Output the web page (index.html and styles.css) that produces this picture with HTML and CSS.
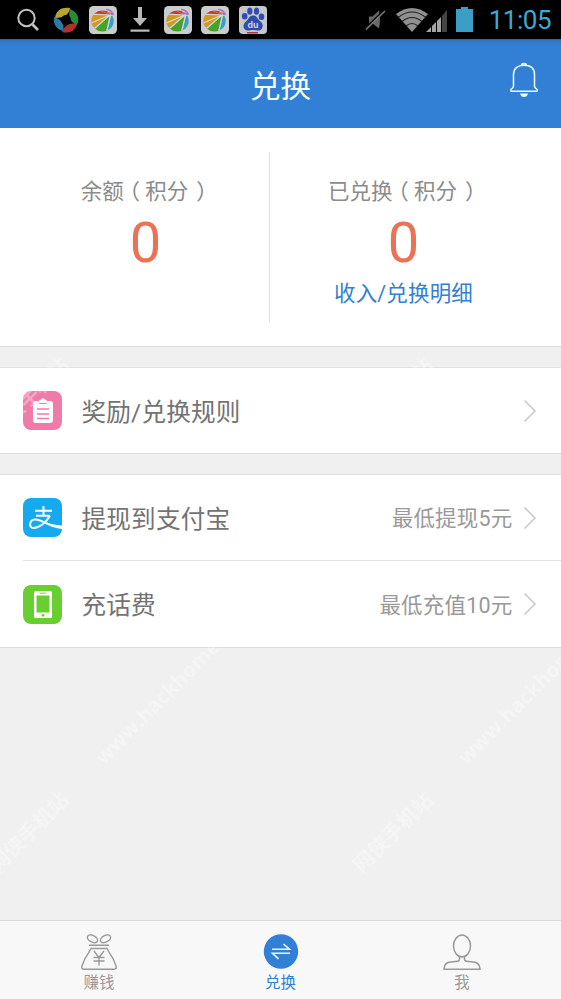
FILE: index.html
```html
<!DOCTYPE html>
<html lang="zh-CN">
<head>
<meta charset="utf-8">
<title>兑换</title>
<link rel="stylesheet" href="styles.css">
</head>
<body>
<svg class="defs" aria-hidden="true">
  <defs>
    <clipPath id="ball"><ellipse cx="13.5" cy="15" rx="11.2" ry="10.5"/></clipPath>
    <symbol id="fan" viewBox="0 0 28 28">
      <rect width="28" height="28" rx="4.5" fill="#cbcccd"/>
      <g clip-path="url(#ball)">
        <path d="M21 9L3 8L8 3z" fill="#c5401f"/>
        <path d="M21 9L9 3L18 2z" fill="#c5401f"/>
        <path d="M21 9L0 9L1 22L6 21z" fill="#d39a1c"/>
        <path d="M21 9L5 22L9 28L18 26z" fill="#45a32a"/>
        <path d="M22 10L18 27L27 21L28 10z" fill="#3b9cc6"/>
        <path d="M21 9L0 8M21 9L0 18M21 9L5 23M21.500 9L17 28" stroke="#d5d7d8" stroke-width="1.2"/>
      </g>
      <path d="M17 3.5q5 0 7.5 5M18 7q3-.5 6 2" fill="none" stroke="#b571b9" stroke-width="1.6"/>
    </symbol>
    <symbol id="chevron" viewBox="0 0 14 24"><path d="M1.5 1.5L12 12L1.5 22.5" fill="none" stroke="#c8c8c8" stroke-width="1.5"/></symbol>
  </defs>
</svg>
<div class="app">
  <div class="status">
    <div class="status-left">
      <svg class="search" width="24" height="24" viewBox="0 0 24 24" fill="none" stroke="#c2c2c2" stroke-width="2"><circle cx="9.500" cy="10" r="8.2"/><path d="M15.500 16.500L21 22" stroke-width="2.6"/></svg>
      <svg width="26" height="26" viewBox="0 0 26 26"><path d="M2 11C3 3 9 0 17 1C17 6 12 11 2 11z" fill="#b9a52c"/><path d="M17 2C25 5 27 12 24 18C17 15 15 9 17 2z" fill="#278c35"/><path d="M24 17C22 24 16 27 9 25C11 18 18 15 24 17z" fill="#b52f31"/><path d="M1 10C8 12 12 17 10 24C3 22 0 17 1 10z" fill="#2b7da6"/><circle cx="13" cy="13" r="5" fill="#000"/></svg>
      <svg width="28" height="28"><use href="#fan"/></svg>
      <svg class="download" width="20" height="26" viewBox="0 0 20 26" fill="#b8b8b8"><path d="M8 0h4v11h5l-7 8l-7-8h5zM.5 22.5h19v2.2H.5z"/></svg>
      <svg width="28" height="28"><use href="#fan"/></svg>
      <svg width="28" height="28"><use href="#fan"/></svg>
      <svg width="28" height="28" viewBox="0 0 28 28"><rect width="28" height="28" rx="4" fill="#c5c7cb"/><g fill="#304dae"><ellipse cx="5.7" cy="10.3" rx="2.8" ry="3.3"/><ellipse cx="10.8" cy="5.2" rx="2.6" ry="3.6"/><ellipse cx="17.5" cy="5.2" rx="2.6" ry="3.6"/><ellipse cx="22.5" cy="10.7" rx="2.8" ry="3.3"/><path d="M14 9.5C18 9.5 18 13 21.5 15.5C26 19 23 25.5 18 24.5Q14 23.5 10 24.5C4.500 25.500 2.500 19 7 15.500C10 13 10 9.500 14 9.500z"/></g><text x="14" y="22.300" class="du">du</text><path d="M8 26.800h11" stroke="#b52d43" stroke-width="1.500"/></svg>
    </div>
    <div class="status-right">
      <svg width="22" height="24" viewBox="0 0 22 24"><path d="M4 8.500h3.500L14 2.500q2 8 0 18l-6.500-5H4z" fill="#686868"/><path d="M0 20.500L19 2" stroke="#080808" stroke-width="1.500"/><path d="M1 21.500L20 3" stroke="#777" stroke-width="1.700"/></svg>
      <svg class="wifi" width="32" height="24" viewBox="0 0 32 24"><path d="M0 6Q16-6 32 6L16 24z" fill="#909090"/><path d="M2 9.500Q16-1.500 30 9.500M6 13.500Q16 5.500 26 13.500M10 18Q16 13 22 18" fill="none" stroke="#202020" stroke-width="1.200"/></svg>
      <svg class="signal" width="22" height="24" viewBox="0 0 22 24"><path d="M0 24L5 19v5zM6 18l4-4v10H6zM11 13l4-4v15h-4z" fill="#a3a3a3"/><path d="M16 8l5-6v22h-5z" fill="#454545"/></svg>
      <svg class="battery" width="17" height="25" viewBox="0 0 17 25"><path d="M5 0h7v2h5v23H0V2h5z" fill="#3b9fc5"/></svg>
      <span class="clock">11:05</span>
    </div>
  </div>

  <header class="header">
    <h1>兑换</h1>
    <svg class="bell" width="30" height="37" viewBox="0 0 30 37" fill="none" stroke="#eaffff" stroke-width="1.500"><path d="M12.500 3.300Q12.500 1.500 15 1.500Q17.500 1.500 17.500 3.300M4.500 24V12.500C4.500 6.500 8.500 3.300 15 3.300S25.500 6.500 25.500 12.500V24Q25.500 26 28 27.300Q29 29.300 27 29.300H3Q1 29.300 2 27.300Q4.500 26 4.500 24z"/><path d="M11 31.500h8Q18 35 15 35T11 31.500z" fill="#eaffff" stroke="none"/></svg>
  </header>

  <section class="balance">
    <div class="col col-left">
      <div class="label">余额<span class="paren">（</span>积分<span class="paren last">）</span></div>
      <div class="amount">0</div>
    </div>
    <div class="col col-right">
      <div class="label">已兑换<span class="paren">（</span>积分<span class="paren last">）</span></div>
      <div class="amount">0</div>
      <a class="detail">收入/兑换明细</a>
    </div>
  </section>

  <section class="group">
    <div class="row">
      <svg class="icon" viewBox="0 0 39 39"><rect width="39" height="39" rx="8" fill="#f07ba8"/><path d="M12.500 10h2.500l1.500 3h7l1.500-3h2.500q2.500 0 2.500 3v16q0 3-3 3H13q-3 0-3-3V13q0-3 2.500-3z" fill="#fff"/><path d="M15.500 12V10.500Q15.500 9 17.500 9Q18 7.300 20 7.300T22.500 9Q24.500 9 24.500 10.500V12z" fill="#fff"/><path d="M14 18h12M14 23h12M14 27.500h12" stroke="#ef7ba8" stroke-width="1.400"/></svg>
      <span class="name">奖励/兑换规则</span>
      <svg class="chev"><use href="#chevron"/></svg>
    </div>
  </section>

  <section class="group">
    <div class="row">
      <svg class="icon" viewBox="0 0 39 39"><rect width="39" height="39" rx="8" fill="#15aaf0"/><g fill="none" stroke="#fff" stroke-width="2"><path d="M12 12.700h17M20.500 8v9.500M13 17.700h14"/><path d="M27 17.500C23 25 16 30 10.500 30C5.500 30 6 22 12 21.500C17 21 22 25.500 30 28"/></g><path d="M21 23.500Q29 27 39 27.500V31Q29 30.500 21 23.500z" fill="#fff"/></svg>
      <span class="name">提现到支付宝</span>
      <span class="note">最低提现5元</span>
      <svg class="chev"><use href="#chevron"/></svg>
    </div>
    <div class="row divided">
      <svg class="icon" viewBox="0 0 39 39"><rect width="39" height="39" rx="8" fill="#69cf30"/><rect x="11" y="6" width="18" height="27" rx="1.500" fill="#fff"/><path d="M13.500 10.500h13v17h-13z" fill="#69cf30"/><path d="M17 8.200h6" stroke="#69cf30"/><circle cx="20" cy="30.300" r="1.400" fill="#69cf30"/></svg>
      <span class="name">充话费</span>
      <span class="note">最低充值10元</span>
      <svg class="chev"><use href="#chevron"/></svg>
    </div>
  </section>

  <nav class="tabs">
    <div class="tab">
      <svg width="36" height="36" viewBox="0 0 36 36" fill="none" stroke="#999" stroke-width="1.400"><ellipse cx="11.500" cy="4.800" rx="5.500" ry="3.300" transform="rotate(28 11.500 4.800)"/><ellipse cx="24.500" cy="4.800" rx="5.500" ry="3.300" transform="rotate(-28 24.500 4.800)"/><path d="M8 11.300h20M10 14.500h16q2 4 6 10l3 7.500q1 3.300-2 3.300H3q-3 0-2-3.300l3-7.500q4-6 6-10zM13 17l5 6.500l5-6.500M12.500 23.500h11M12.500 27h11M18 23.500v8"/></svg>
      <span>赚钱</span>
    </div>
    <div class="tab active">
      <svg width="36" height="36" viewBox="0 0 36 36"><circle cx="18" cy="17.500" r="17.200" fill="#3280d6"/><path d="M9 15.300h17.500L20.500 10M27 19.300H9.500l6 5.500" fill="none" stroke="#e8f5ff" stroke-width="1.600"/></svg>
      <span>兑换</span>
    </div>
    <div class="tab">
      <svg width="38" height="36" viewBox="0 0 38 36" fill="none" stroke="#999" stroke-width="1.500"><ellipse cx="19" cy="12" rx="8.500" ry="11"/><path d="M16.500 22.500V25q0 2-2 2.200L6 28.200Q1.500 29 1 35.200H37Q36.500 29 32 28.200l-8.500-1q-2-.2-2-2.200V22.500"/></svg>
      <span>我</span>
    </div>
  </nav>

  <div class="marks" aria-hidden="true">
    <span class="mark m1">网侠手机站</span>
    <span class="mark m2">网侠手机站</span>
    <span class="mark m3">网侠手机站</span>
    <span class="mark m4">网侠手机站</span>
    <span class="mark m5">www.hackhome.com</span>
    <span class="mark m6">www.hackhome.com</span>
  </div>
</div>
</body>
</html>
```
FILE: styles.css
```css
* { box-sizing: border-box; }
body { margin: 0; font-family: Roboto, "Noto Sans CJK SC", sans-serif; }
svg { display: block; flex: none; }
.defs { position: absolute; width: 0; height: 0; }
.app {
  position: relative;
  width: 561px;
  height: 999px;
  overflow: hidden;
  background: #f0f0f0;
  display: flex;
  flex-direction: column;
}
.status {
  height: 39px;
  flex: none;
  background: #000;
  display: flex;
  justify-content: space-between;
  padding: 0 10px 0 17px;
}
.status-left { display: flex; align-items: center; gap: 9.5px; }
.search { margin-right: 2.5px; }
.download { margin: 0 4px; }
.status-right { display: flex; align-items: center; }
.wifi { margin-left: 9px; }
.signal { margin-left: -2px; }
.battery { margin: 0 16px 0 8px; }
.clock { color: #3da9d2; font-size: 26px; line-height: 39px; letter-spacing: -.5px; padding-top: 2px; }
.du { font: bold 9px "Liberation Sans", sans-serif; fill: #d6dbe6; text-anchor: middle; }

.header {
  height: 89px;
  flex: none;
  display: grid;
  grid-template-columns: 1fr auto 1fr;
  align-items: center;
  padding: 0 22px;
  background: linear-gradient(#345f92 0, #3079ca 2px, #3280d6 9px);
}
.header h1 {
  grid-column: 2;
  margin: 7px 0 0;
  font-size: 30.5px;
  line-height: 40px;
  font-weight: 400;
  color: #f4ffff;
}
.bell { justify-self: end; margin-top: -7px; }

.balance {
  height: 219px;
  flex: none;
  background: #fff;
  border-bottom: 1px solid #dcdcdc;
  padding: 24px 0;
  display: flex;
}
.col { display: flex; flex-direction: column; align-items: center; height: 170px; padding-top: 24px; }
.col-left { width: 270px; border-right: 1px solid #e0e0e0; padding-left: 22px; }
.col-right { width: 291px; padding-right: 24px; }
.label { font-size: 21.5px; line-height: 32px; color: #8b8b8b; white-space: nowrap; }
.paren { font-feature-settings: "halt"; padding: 0 .25em; }
.last { padding: 0 .15em 0 .37em; }
.amount { font-size: 56px; line-height: 60px; margin-top: 5px; color: #eb7355; }
.detail { font-size: 21.5px; line-height: 32px; letter-spacing: .15px; margin-top: 5px; color: #3280d0; }

.group {
  flex: none;
  margin-top: 20px;
  background: #fff;
  border-top: 1px solid #e2e2e2;
  border-bottom: 1px solid #dcdcdc;
}
.row { height: 85px; display: flex; align-items: center; margin-left: 23px; padding-right: 24px; }
.divided { height: 87px; border-top: 1px solid #e2e2e2; }
.icon { width: 39px; height: 39px; }
.name { font-size: 24.6px; line-height: 36px; letter-spacing: .2px; color: #737373; margin: 4px auto 0 19.5px; }
.note { font-size: 21.5px; line-height: 32px; letter-spacing: .2px; color: #999; margin-top: 3px; }
.chev { width: 14px; height: 24px; margin-left: 10.5px; }

.tabs {
  height: 79px;
  flex: none;
  margin-top: auto;
  background: #f8f8f8;
  border-top: 1px solid #dadada;
  display: flex;
  justify-content: center;
}
.tab {
  width: 181.5px;
  display: flex;
  flex-direction: column;
  align-items: center;
  padding-top: 13px;
  font-size: 15.5px;
  line-height: 22px;
  color: #999;
}
.tab span { margin-top: 2px; }
.active { color: #3280d0; }

.marks { position: absolute; inset: 0; overflow: hidden; pointer-events: none; }
.mark {
  position: absolute;
  font: 700 20.5px/26px "Open Sans", "Noto Sans CJK SC", sans-serif;
  color: rgba(255, 255, 255, .34);
  white-space: nowrap;
  transform-origin: 0 50%;
  transform: rotate(-45deg);
}
.m1 { left: -8px; top: 855px; }
.m2 { left: 356px; top: 855px; }
.m3 { left: -8px; top: 420px; }
.m4 { left: 356px; top: 420px; }
.m5 { left: 98px; top: 747px; }
.m6 { left: 461px; top: 747px; }
```
